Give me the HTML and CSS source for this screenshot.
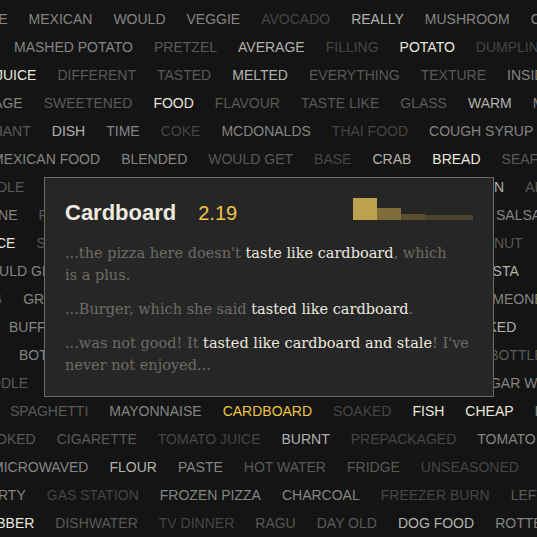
FILE: index.html
```html
<!doctype html>
<html lang="en">
  <head>
    <meta charset="UTF-8" />
    <meta name="viewport" content="width=device-width, initial-scale=1.0" />
    <title>Tastes Like - Cardboard</title>
    <link rel="stylesheet" href="styles.css">
  </head>
  <body>
    <div class="cloud">
      <div class="row r1">
        <span class="w3">CHEESE</span><span class="w3">MEXICAN</span><span class="w3">WOULD</span><span class="w3">VEGGIE</span><span class="w5">AVOCADO</span><span class="w2">REALLY</span><span class="w3">MUSHROOM</span><span class="w3">CRUNCHY</span>
      </div>
      <div class="row r2">
        <span class="w3">MASHED POTATO</span><span class="w4">PRETZEL</span><span class="w2">AVERAGE</span><span class="w5">FILLING</span><span class="w1">POTATO</span><span class="w5">DUMPLING</span>
      </div>
      <div class="row r3">
        <span class="w1">JUICE</span><span class="w4">DIFFERENT</span><span class="w4">TASTED</span><span class="w2">MELTED</span><span class="w4">EVERYTHING</span><span class="w4">TEXTURE</span><span class="w3">INSIDE</span>
      </div>
      <div class="row r4">
        <span class="w3">SAUSAGE</span><span class="w4">SWEETENED</span><span class="w1">FOOD</span><span class="w4">FLAVOUR</span><span class="w4">TASTE LIKE</span><span class="w4">GLASS</span><span class="w2">WARM</span><span class="w3">MEAT</span>
      </div>
      <div class="row r5">
        <span class="w4">GIANT</span><span class="w2">DISH</span><span class="w3">TIME</span><span class="w5">COKE</span><span class="w3">MCDONALDS</span><span class="w5">THAI FOOD</span><span class="w3">COUGH SYRUP</span>
      </div>
      <div class="row r6">
        <span class="w3">MEXICAN FOOD</span><span class="w3">BLENDED</span><span class="w4">WOULD GET</span><span class="w5">BASE</span><span class="w2">CRAB</span><span class="w1">BREAD</span><span class="w4">SEAFOOD</span>
      </div>
      <div class="row r7">
        <span class="w4">GRIDDLE</span><span class="w4">CRACKER</span><span class="w3">RUBBERY</span><span class="w4">PLASTIC</span><span class="w3">SAWDUST</span><span class="w4">MOLD</span><span class="w2">BACON</span><span class="w4">APPLE</span>
      </div>
      <div class="row r8">
        <span class="w3">WINE</span><span class="w4">FRENCH FRIES</span><span class="w3">LEATHER</span><span class="w4">STYROFOAM</span><span class="w3">CHALKY</span><span class="w4">WAXY</span><span class="w3">SALSA</span>
      </div>
      <div class="row r9">
        <span class="w1">RICE</span><span class="w4">SPONGE</span><span class="w3">OLD BREAD</span><span class="w4">CRACKERS</span><span class="w3">BISCUIT</span><span class="w4">CHEESE</span><span class="w4">DONUT</span>
      </div>
      <div class="row r10">
        <span class="w3">WOULD GET</span><span class="w4">BURNT TOAST</span><span class="w3">CEMENT</span><span class="w4">MELON</span><span class="w3">SOGGY BREAD</span><span class="w2">PASTA</span>
      </div>
      <div class="row r11">
        <span class="w4">EGG</span><span class="w3">GRAVY</span><span class="w4">WARMED</span><span class="w3">BEEF JERKY</span><span class="w4">PORRIDGE</span><span class="w3">CHEMICAL</span><span class="w3">SOMEONE</span>
      </div>
      <div class="row r12">
        <span class="w3">BUFFET</span><span class="w4">CHEWY</span><span class="w3">TASTELESS</span><span class="w4">SAWDUST</span><span class="w3">TOILET PAPER</span><span class="w2">BAKED</span>
      </div>
      <div class="row r13">
        <span class="w3">BOTTOM</span><span class="w4">METALLIC</span><span class="w3">FISHY</span><span class="w4">CANNED TUNA</span><span class="w3">DRY CHICKEN</span><span class="w4">BOTTLED WATER</span>
      </div>
      <div class="row r14">
        <span class="w4">NOODLE</span><span class="w3">GREASY</span><span class="w4">LUKEWARM</span><span class="w3">CANNED SOUP</span><span class="w4">DRY CHICKEN</span><span class="w3">SUGAR WATER</span>
      </div>
      <div class="row r15">
        <span class="w4">SPAGHETTI</span><span class="w3">MAYONNAISE</span><span class="hl">CARDBOARD</span><span class="w5">SOAKED</span><span class="w1">FISH</span><span class="w1">CHEAP</span><span class="w3">ICY</span>
      </div>
      <div class="row r16">
        <span class="w4">SMOKED</span><span class="w4">CIGARETTE</span><span class="w5">TOMATO JUICE</span><span class="w2">BURNT</span><span class="w5">PREPACKAGED</span><span class="w3">TOMATO</span>
      </div>
      <div class="row r17">
        <span class="w3">MICROWAVED</span><span class="w2">FLOUR</span><span class="w3">PASTE</span><span class="w4">HOT WATER</span><span class="w4">FRIDGE</span><span class="w5">UNSEASONED</span><span class="w3">ICE</span>
      </div>
      <div class="row r18">
        <span class="w3">DIRTY</span><span class="w5">GAS STATION</span><span class="w3">FROZEN PIZZA</span><span class="w3">CHARCOAL</span><span class="w5">FREEZER BURN</span><span class="w4">LEFTOVERS</span>
      </div>
      <div class="row r19">
        <span class="w1">RUBBER</span><span class="w4">DISHWATER</span><span class="w5">TV DINNER</span><span class="w4">RAGU</span><span class="w4">DAY OLD</span><span class="w2">DOG FOOD</span><span class="w3">ROTTEN</span>
      </div>
    </div>

    <div class="card">
      <div class="card-head">
        <h2 class="term">Cardboard</h2>
        <span class="score">2.19</span>
        <div class="hist">
          <i class="b1" style="height: 22px"></i>
          <i class="b2" style="height: 12px"></i>
          <i class="b3" style="height: 6px"></i>
          <i class="b4" style="height: 5px"></i>
          <i class="b4" style="height: 5px"></i>
        </div>
      </div>
      <div class="quotes">
        <p>...the pizza here doesn't <span class="hit">taste like cardboard</span>, which<br />is a plus.</p>
        <p>...Burger, which she said <span class="hit">tasted like cardboard</span>.</p>
        <p>...was not good! It <span class="hit">tasted like cardboard and stale</span>! I've never not enjoyed...</p>
      </div>
    </div>
  </body>
</html>
```

FILE: styles.css
```css
html,
body {
  margin: 0;
  height: 100%;
}
body {
  position: relative;
  overflow: hidden;
  background: #141414;
  font-family: "Liberation Sans", Arial, sans-serif;
}

/* word cloud */
.cloud {
  height: 537px;
  padding-top: 5px;
  box-sizing: border-box;
  overflow: hidden;
}
.row {
  display: flex;
  gap: 21px;
  height: 28px;
  line-height: 28px;
  font-size: 14px;
  white-space: nowrap;
}
.row span {
  flex: none;
}
.r1 { margin-left: -50px; }
.r2 { margin-left: 14px; }
.r3 { margin-left: -4px; }
.r4 { margin-left: -45px; }
.r5 { margin-left: -12px; }
.r6 { margin-left: -8px; }
.r7 { margin-left: -38px; }
.r8 { margin-left: -19px; }
.r9 { margin-left: -18px; }
.r10 { margin-left: -25px; }
.r11 { margin-left: -29px; }
.r12 { margin-left: 9px; }
.r13 { margin-left: 19px; }
.r14 { margin-left: -31px; }
.r15 { margin-left: 10px; }
.r16 { margin-left: -25px; }
.r17 { margin-left: -8px; }
.r18 { margin-left: -16px; }
.r19 { margin-left: -24px; }

.w1 { color: #e9e8dc; }
.w2 { color: #b2b2ad; }
.w3 { color: #858583; }
.w4 { color: #5a5a58; }
.w5 { color: #464645; }
.hl { color: #efc445; }

/* detail card */
.card {
  position: absolute;
  left: 44px;
  top: 177px;
  width: 450px;
  box-sizing: border-box;
  padding: 20px;
  border: 1px solid #6c6b62;
  background: #262626;
}
.card-head {
  display: flex;
  align-items: baseline;
}
.term {
  margin: 0;
  font-size: 22px;
  line-height: 22px;
  font-weight: bold;
  color: #ecebdf;
}
.score {
  margin-left: 22px;
  font-size: 20px;
  color: #f0c548;
}
.hist {
  margin-left: auto;
  display: flex;
  align-items: flex-end;
  height: 22px;
}
.hist i {
  width: 24px;
}
.b1 { background: #bca24f; }
.b2 { background: #7f6d3b; }
.b3 { background: #5b4f31; }
.b4 { background: #4d442e; }

.quotes {
  margin-top: 17px;
  font-family: "DejaVu Serif", "Liberation Serif", serif;
  font-size: 14.5px;
  line-height: 22px;
  color: #6d6c65;
}
.quotes p {
  margin: 0 0 12px;
}
.quotes p:last-child {
  margin-bottom: 0;
}
.hit {
  color: #ebeadf;
}
```
